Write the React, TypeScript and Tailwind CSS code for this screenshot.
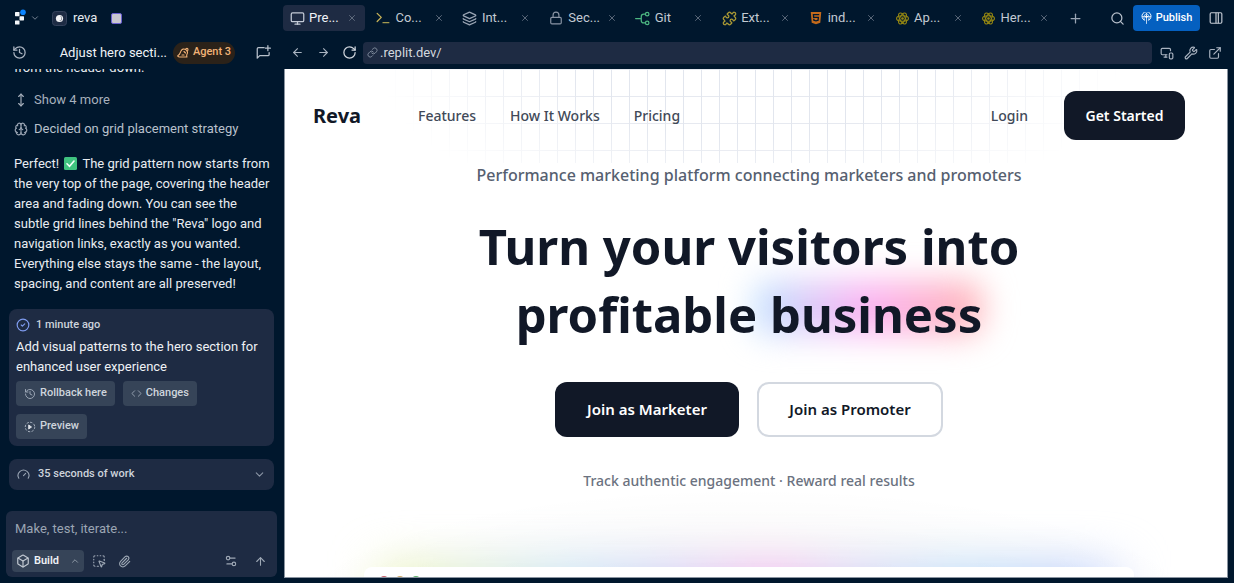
import React from "react";
import {
  ArrowLeft,
  ArrowRight,
  ArrowUp,
  Box,
  Brain,
  ChevronDown,
  ChevronUp,
  CircleCheck,
  Code,
  ExternalLink,
  Gauge,
  History,
  Layers,
  Link,
  Lock,
  Monitor,
  MonitorSmartphone,
  MoveVertical,
  Paperclip,
  Plus,
  Puzzle,
  RotateCw,
  Search,
  Settings2,
  SquareDashedMousePointer,
  Wrench,
  X,
} from "lucide-react";
import { FaHtml5 } from "react-icons/fa";

function ReplitLogo() {
  return (
    <svg width="14" height="18" viewBox="0 0 14 18" aria-hidden="true">
      <rect x="1" y="3" width="4.5" height="4.2" rx="0.6" fill="#f4f7fa" />
      <rect x="5.5" y="7.2" width="4.5" height="4.2" rx="0.6" fill="#f4f7fa" />
      <rect x="1" y="11.4" width="4.5" height="4.2" rx="0.6" fill="#f4f7fa" />
      <circle cx="9" cy="3.2" r="2.8" fill="#0a84ff" />
    </svg>
  );
}

function ProjectLogo() {
  return (
    <svg width="15" height="15" viewBox="0 0 15 15" aria-hidden="true">
      <rect x="0.5" y="0.5" width="14" height="14" rx="3" fill="#1e2c44" stroke="#33415a" />
      <circle cx="7.5" cy="7.5" r="3.6" fill="#f3f4f6" />
      <path d="M8 5a2.600 2.600 0 0 1-1 5 2.500 2.500 0 0 0 3-2.500A2.500 2.500 0 0 0 8 5z" fill="#1e2c44" />
    </svg>
  );
}

function AgentIcon() {
  return (
    <svg width="12" height="12" viewBox="0 0 24 24" fill="none" stroke="currentColor" strokeWidth="2.2" strokeLinecap="round" strokeLinejoin="round" aria-hidden="true">
      <path d="M2 17c4-2 4-5 6-9s6-5 9-3c4 2 5 6 3 9-1 3-1 4 0 6H5c-3 0-4-2-3-3z" />
      <path d="M17 5c1-3 5-3 5 0 0 1-1 3-2 3M14 9l3 3M10 16h4" />
    </svg>
  );
}

function NewChatIcon() {
  return (
    <svg width="15" height="15" viewBox="0 0 24 24" fill="none" stroke="currentColor" strokeWidth="2" strokeLinecap="round" strokeLinejoin="round" aria-hidden="true">
      <path d="M13 4H4a2 2 0 0 0-2 2v15l4-4h13a2 2 0 0 0 2-2v-3" />
      <path d="M19 1v8M15 5h8" />
    </svg>
  );
}

function GitIcon() {
  return (
    <svg width="15" height="15" viewBox="0 0 24 24" fill="none" stroke="#4cb782" strokeWidth="2" strokeLinecap="round" aria-hidden="true">
      <circle cx="19.5" cy="5" r="2.8" />
      <circle cx="19.5" cy="19" r="2.8" />
      <path d="M1 12h9M16.500 5H14a4 4 0 0 0-4 4v6a4 4 0 0 0 4 4h2.500" />
    </svg>
  );
}

function ConsoleIcon() {
  return (
    <svg width="14" height="14" viewBox="0 0 24 24" fill="none" strokeWidth="2.200" strokeLinecap="round" strokeLinejoin="round" aria-hidden="true">
      <path d="M2 4l7 7-7 7" stroke="#c9b458" />
      <path d="M12 20h10" stroke="#a39a50" />
    </svg>
  );
}

function AtomIcon() {
  return (
    <svg width="13" height="13" viewBox="0 0 24 24" fill="none" stroke="#948712" strokeWidth="2" aria-hidden="true">
      <ellipse cx="12" cy="12" rx="11" ry="5" />
      <ellipse cx="12" cy="12" rx="11" ry="5" transform="rotate(60 12 12)" />
      <ellipse cx="12" cy="12" rx="11" ry="5" transform="rotate(120 12 12)" />
      <circle cx="12" cy="12" r="1.500" fill="#948712" />
    </svg>
  );
}

function PublishIcon() {
  return (
    <svg width="11" height="12" viewBox="0 0 24 26" fill="none" stroke="currentColor" strokeWidth="2" strokeLinecap="round" aria-hidden="true">
      <path d="M7 18a10 10 0 1 1 10 0" />
      <path d="M12 25V3M3 10h18M8 17c-3-5-2-10 4-14 6 4 7 9 4 14" strokeWidth="1.600" />
      <circle cx="12" cy="10" r="2" fill="currentColor" />
    </svg>
  );
}

function PanelIcon() {
  return (
    <svg width="14" height="14" viewBox="0 0 24 24" fill="none" stroke="currentColor" strokeWidth="2" aria-hidden="true">
      <rect x="2" y="3" width="20" height="18" rx="2" />
      <path d="M12 3v18M16 3v18" />
    </svg>
  );
}

function PreviewIcon() {
  return (
    <svg width="12" height="12" viewBox="0 0 24 24" fill="none" stroke="#aab4c1" strokeWidth="2" strokeLinecap="round" aria-hidden="true">
      <circle cx="12" cy="12" r="9.500" strokeDasharray="3 4.460" />
      <path d="M10 8.500l5 3.500-5 3.500z" fill="#dfe3e8" stroke="#dfe3e8" />
    </svg>
  );
}

function CheckEmoji() {
  return (
    <svg className="mx-0.5 inline-block align-[-2px]" width="13" height="13" viewBox="0 0 13 13" role="img" aria-label="Check mark">
      <rect width="13" height="13" rx="1.500" fill="#3fc380" />
      <path d="M3 6.800l2.500 2.500L10 4" fill="none" stroke="#f2fff8" strokeWidth="1.600" strokeLinecap="round" />
    </svg>
  );
}

const tabs = [
  { label: "Pre...", icon: <Monitor size={15} className="text-[#c3cad6]" /> },
  { label: "Co...", icon: <ConsoleIcon /> },
  { label: "Int...", icon: <Layers size={15} className="text-[#9aa5b4]" /> },
  { label: "Sec...", icon: <Lock size={14} className="text-[#8a95a5]" /> },
  { label: "Git", icon: <GitIcon /> },
  { label: "Ext...", icon: <Puzzle size={15} className="text-[#ab9a35]" /> },
  { label: "ind...", icon: <FaHtml5 size={14} className="text-[#c46a1b]" /> },
  { label: "Ap...", icon: <AtomIcon /> },
  { label: "Her...", icon: <AtomIcon /> },
];

function TabBar() {
  return (
    <div className="flex h-9 items-center pr-2">
      <div role="tablist" className="grid min-w-0 flex-1 grid-cols-9 gap-1">
        {tabs.map((tab, i) => (
          <div
            key={i}
            className={
              i === 0
                ? "flex h-[26px] items-center rounded bg-[#1e2b43] pl-1.5 pr-2 text-[#f0f3f7]"
                : "flex h-[26px] items-center rounded pl-1.5 pr-2 text-[#c3cad3]"
            }
          >
            <button role="tab" aria-selected={i === 0} className="flex min-w-0 flex-1 items-center gap-1 text-[13px]">
              <span className="flex w-4 justify-center">{tab.icon}</span>
              <span className="whitespace-nowrap">{tab.label}</span>
            </button>
            <button aria-label="Close tab" className="text-[#6b7788]">
              <X size={10} />
            </button>
          </div>
        ))}
      </div>
      <button aria-label="New tab" className="ml-2 flex w-5 justify-center text-[#9aa5b4]">
        <Plus size={15} />
      </button>
      <button aria-label="Search" className="ml-5 flex w-6 justify-center text-[#b8c1cc]">
        <Search size={15} />
      </button>
      <button className="ml-1 flex h-[26px] w-[67px] items-center justify-center gap-1 rounded bg-[#0560c0] text-[11px] font-medium text-white">
        <PublishIcon />
        Publish
      </button>
      <button aria-label="Toggle panel" className="ml-1.5 flex w-5 justify-center text-[#c3cad3]">
        <PanelIcon />
      </button>
    </div>
  );
}

function AddressBar() {
  return (
    <div className="flex h-[33px] items-center pr-3 text-[#aab4c1]">
      <button aria-label="Back" className="flex w-7 justify-center">
        <ArrowLeft size={13} />
      </button>
      <button aria-label="Forward" className="flex w-6 justify-center">
        <ArrowRight size={13} />
      </button>
      <button aria-label="Reload" className="flex w-7 justify-center text-[#d0d6de]">
        <RotateCw size={15} />
      </button>
      <label className="flex h-[22px] min-w-0 flex-1 items-center gap-0.5 rounded bg-[#1e2b43] px-1">
        <Link size={11} className="text-[#8490a1]" />
        <input aria-label="Page address" defaultValue=".replit.dev/" className="min-w-0 flex-1 bg-transparent text-[13px] text-[#d3d8df] outline-none" />
      </label>
      <div className="flex items-center gap-2.5 pl-2">
        <button aria-label="Device size"><MonitorSmartphone size={14} /></button>
        <button aria-label="Developer tools"><Wrench size={14} /></button>
        <button aria-label="Open in new window"><ExternalLink size={14} /></button>
      </div>
    </div>
  );
}

function Chat() {
  return (
    <div className="flex min-h-0 flex-1 flex-col justify-end overflow-hidden pb-[21px] text-[13px]">
      <div className="flex shrink-0 flex-col px-3.5 text-[#e8ecf1]">
        <p className="leading-5">from the header down.</p>
        <button className="mt-3 flex h-5 items-center gap-1.5 text-[#a7b0bc]">
          <MoveVertical size={14} />
          Show 4 more
        </button>
        <button className="mt-[9px] flex h-5 items-center gap-1.5 text-[#b9c1cc]">
          <Brain size={14} className="text-[#9aa5b4]" />
          Decided on grid placement strategy
        </button>
        <p className="mt-[15px] whitespace-nowrap leading-5">
          Perfect! <CheckEmoji /> The grid pattern now starts from
          <br />
          the very top of the page, covering the header
          <br />
          area and fading down. You can see the
          <br />
          subtle grid lines behind the "Reva" logo and
          <br />
          navigation links, exactly as you wanted.
          <br />
          Everything else stays the same - the layout,
          <br />
          spacing, and content are all preserved!
        </p>
      </div>

      <section className="mx-[9px] mt-[15px] shrink-0 rounded-lg bg-[#1e2b43] px-[7px] pb-[7px] pt-1.5">
        <div className="flex h-5 items-center gap-1.5 text-[11px] font-medium text-[#cdd3db]">
          <CircleCheck size={14} className="text-[#7f9cf0]" />
          1 minute ago
        </div>
        <p className="mt-0.5 whitespace-nowrap leading-5 text-[#eef1f5]">
          Add visual patterns to the hero section for
          <br />
          enhanced user experience
        </p>
        <div className="mt-1 flex flex-wrap gap-2 text-[11px] font-medium text-[#cfd5dc] [&>button]:flex [&>button]:h-[25px] [&>button]:items-center [&>button]:gap-1 [&>button]:rounded [&>button]:bg-[#364458] [&>button]:px-2">
          <button><History size={12} className="text-[#9aa5b4]" />Rollback here</button>
          <button><Code size={11} className="text-[#9aa5b4]" />Changes</button>
          <button><PreviewIcon />Preview</button>
        </div>
      </section>

      <button className="mx-[9px] mt-[13px] flex h-[31px] shrink-0 items-center gap-2 rounded-lg bg-[#1e2b43] px-2 text-[11px] font-medium text-[#cdd3db]">
        <Gauge size={13} className="text-[#9aa5b4]" />
        <span className="flex-1 text-left">35 seconds of work</span>
        <ChevronDown size={13} className="text-[#8b96a6]" />
      </button>
    </div>
  );
}

function Composer() {
  return (
    <form className="mx-1.5 mb-1.5 rounded-md bg-[#1e2b43] px-1.5 pb-[5px] pt-1.5" onSubmit={(e) => e.preventDefault()}>
      <input aria-label="Message" placeholder="Make, test, iterate..." className="block h-[22px] w-full bg-transparent px-[3px] text-[13px] outline-none placeholder:text-[#9ba5b3]" />
      <div className="mt-[11px] flex h-[22px] items-center text-[#9ea8b5]">
        <button type="button" className="flex h-[22px] w-[72px] items-center gap-1 rounded bg-[#364458] px-1 text-[11px] font-semibold text-[#eef1f5]">
          <Box size={14} className="text-[#c3cad3]" />
          <span className="flex-1 text-left">Build</span>
          <ChevronUp size={10} className="text-[#9ea8b5]" />
        </button>
        <button type="button" aria-label="Select element" className="ml-2"><SquareDashedMousePointer size={14} /></button>
        <button type="button" aria-label="Attach file" className="ml-3"><Paperclip size={13} /></button>
        <button type="button" aria-label="Options" className="ml-auto"><Settings2 size={14} /></button>
        <button type="submit" aria-label="Send" className="ml-4 mr-1"><ArrowUp size={13} /></button>
      </div>
    </form>
  );
}

function Sidebar() {
  return (
    <aside className="flex w-[283px] shrink-0 flex-col">
      <div className="flex h-9 items-center px-3.5">
        <button aria-label="Main menu" className="flex items-center gap-0.5 text-[#8b96a6]">
          <ReplitLogo />
          <ChevronDown size={10} />
        </button>
        <button className="ml-1 flex items-center gap-1.5 pl-2 text-[13px] text-[#e6eaef]">
          <ProjectLogo />
          reva
        </button>
        <span className="ml-3.5 size-[11px] rounded-[2px] border border-[#6a5fd0] bg-[#c9c6cf]" />
      </div>
      <div className="flex h-[33px] items-center px-3 text-[13px]">
        <button aria-label="History" className="text-[#aab4c1]"><History size={15} /></button>
        <span className="ml-auto whitespace-nowrap text-[#f0f3f7]">Adjust hero secti...</span>
        <span className="ml-1.5 flex h-[22px] w-[62px] items-center justify-center gap-1 whitespace-nowrap rounded-full bg-[#2b2219] text-[11px] font-medium text-[#f2b277]">
          <AgentIcon />
          Agent 3
        </span>
        <button aria-label="New chat" className="ml-[21px] text-[#b8c1cc]"><NewChatIcon /></button>
      </div>
      <Chat />
      <Composer />
    </aside>
  );
}

function LandingPage() {
  return (
    <main className="relative isolate min-h-0 flex-1 overflow-hidden border-b border-l border-r border-[#8a94a0] bg-white pr-3.5 font-['Noto_Sans','Open_Sans',sans-serif] text-[#111827]">
      <div className="pointer-events-none absolute left-0 right-3.5 top-0 -z-10 h-[94px] bg-[linear-gradient(to_right,#e2e6ee_1px,transparent_1px),linear-gradient(to_bottom,#e6e9f0_1px,transparent_1px)] bg-[size:18px_27px] bg-[position:2px_0px] [mask-image:radial-gradient(ellipse_40%_164%_at_50%_0%,black_45%,transparent_100%)]" />

      <header className="flex h-[93px] items-center pl-7 pr-7 text-[14px] font-medium text-[#414958]">
        <a href="#home" className="w-[105px] text-[20px] font-bold text-[#111827]">Reva</a>
        <nav className="flex gap-[34px] whitespace-nowrap">
          <a href="#features">Features</a>
          <a href="#how-it-works">How It Works</a>
          <a href="#pricing">Pricing</a>
        </nav>
        <a href="#login" className="ml-auto">Login</a>
        <a href="#start" className="ml-9 flex h-[49px] w-[121px] items-center justify-center whitespace-nowrap rounded-xl bg-[#111827] font-semibold text-white">
          Get Started
        </a>
      </header>

      <div className="flex flex-col items-center">
        <p className="whitespace-nowrap text-[16px] font-medium leading-[26px] text-[#566070]">
          Performance marketing platform connecting marketers and promoters
        </p>
        <h1 className="mt-6 whitespace-nowrap text-center text-[49px] font-bold leading-[68px]">
          Turn your visitors into
          <br />
          profitable{" "}
          <span className="relative">
            <span className="absolute -left-4 right-0 top-0 bottom-3 -z-10 rounded-2xl bg-[linear-gradient(to_right,#bfe3ff,#fbb2f2_50%,#ffb4b4)] blur-lg" />
            business
          </span>
        </h1>
        <div className="mt-[34px] flex gap-[18px] text-[15px] font-semibold">
          <button className="h-[55px] w-[184px] whitespace-nowrap rounded-xl bg-[#111827] text-white">Join as Marketer</button>
          <button className="h-[55px] w-[186px] whitespace-nowrap rounded-xl border-2 border-[#d3d8e0] bg-white">Join as Promoter</button>
        </div>
        <p className="mt-8 whitespace-nowrap text-[14px] font-medium leading-6 text-[#6b7280]">
          Track authentic engagement · Reward real results
        </p>
        <div className="relative mt-[74px] w-[83%]">
          <div className="absolute -inset-x-20 -top-20 -z-10 h-64 bg-[radial-gradient(closest-side,rgba(0,0,0,0.05),transparent)]" />
          <div className="absolute inset-x-4 top-0 -z-10 h-24 bg-[linear-gradient(to_right,#eef5b0,#c3e2f5_26%,#ccd0f8_38%,#f5b4ee_53%,#d3d0f6_64%,#b8dcfa_78%,#b8cdfa_92%,#d0dcff)] blur-xl" />
          <div className="flex h-60 gap-2 rounded-t-lg bg-white px-4 pt-[9px]">
            <span className="size-2 rounded-full bg-[#c8606c]" />
            <span className="size-2 rounded-full bg-[#cfa765]" />
            <span className="size-2 rounded-full bg-[#5fb56c]" />
          </div>
        </div>
      </div>
    </main>
  );
}

export default function App() {
  return (
    <div className="flex h-screen overflow-hidden bg-[#00172d] font-['Roboto',sans-serif]">
      <Sidebar />
      <div className="flex min-w-0 flex-1 flex-col pb-[5px]">
        <TabBar />
        <AddressBar />
        <div className="flex min-h-0 flex-1 pl-px pr-1.5">
          <LandingPage />
        </div>
      </div>
    </div>
  );
}
